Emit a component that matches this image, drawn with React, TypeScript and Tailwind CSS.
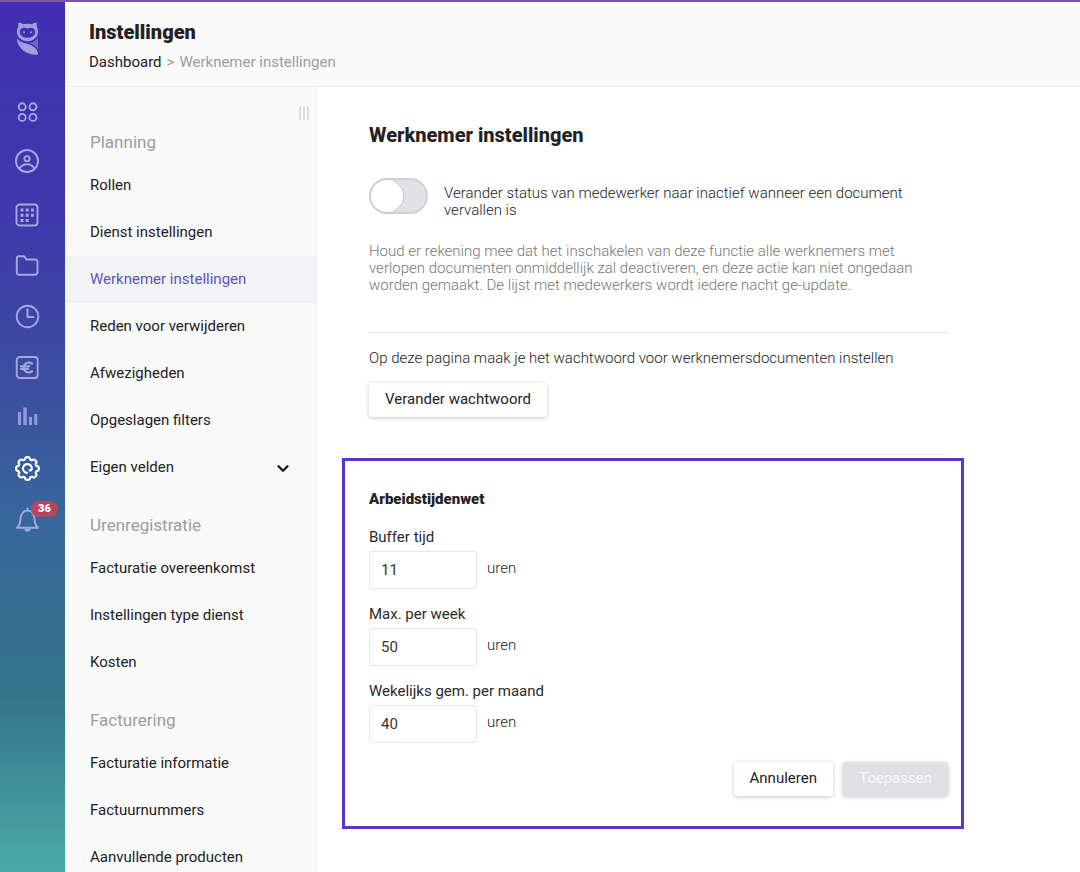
import { useState, type ReactNode } from 'react';
import clsx from 'clsx';

interface NavItem {
  label: string;
  expandable?: boolean;
}

interface NavGroup {
  title: string;
  items: NavItem[];
}

const groups: NavGroup[] = [
  {
    title: 'Planning',
    items: [
      { label: 'Rollen' },
      { label: 'Dienst instellingen' },
      { label: 'Werknemer instellingen' },
      { label: 'Reden voor verwijderen' },
      { label: 'Afwezigheden' },
      { label: 'Opgeslagen filters' },
      { label: 'Eigen velden', expandable: true },
    ],
  },
  {
    title: 'Urenregistratie',
    items: [
      { label: 'Facturatie overeenkomst' },
      { label: 'Instellingen type dienst' },
      { label: 'Kosten' },
    ],
  },
  {
    title: 'Facturering',
    items: [
      { label: 'Facturatie informatie' },
      { label: 'Factuurnummers' },
      { label: 'Aanvullende producten' },
    ],
  },
];

// outline of a gear with eight soft teeth, centred in the 26px icon box
const gearPoints = Array.from({ length: 144 }, (_, i) => {
  const angle = (i / 144) * Math.PI * 2;
  const radius = 10.2 + 1.1 * Math.tanh(2.2 * (Math.cos(8 * angle) + 0.25));
  return `${(13.5 + radius * Math.cos(angle)).toFixed(2)},${(12.5 + radius * Math.sin(angle)).toFixed(2)}`;
}).join(' ');

function RailLink({ label, active, children }: { label: string; active?: boolean; children: ReactNode }) {
  return (
    <a
      href="#"
      aria-label={label}
      className={clsx('relative flex h-[51px] shrink-0 items-center', active ? 'text-white' : 'text-[#a5a6e6]')}
    >
      <svg
        width="26"
        height="26"
        viewBox="0 0 26 26"
        fill="none"
        stroke="currentColor"
        strokeWidth="1.9"
        strokeLinecap="round"
        strokeLinejoin="round"
        className="overflow-visible"
      >
        {children}
      </svg>
      {label === 'Meldingen' && (
        <span className="absolute left-[17px] top-[7px] flex h-4 w-[27px] items-center justify-center rounded-full bg-[#b8455f] text-[11px] font-black text-white">
          36
        </span>
      )}
    </a>
  );
}

function Rail() {
  return (
    <aside className="flex w-[65px] shrink-0 flex-col overflow-hidden bg-[linear-gradient(180deg,#402fb0_0%,#3f38ab_25%,#3b509f_45%,#37679a_60%,#35758b_80%,#4baaa8_100%)] pl-[14px] pt-[18px]">
      <a href="#" aria-label="Home" className="mb-[30px] block text-[#a39de4]">
        <svg width="26" height="36" viewBox="0 0 26 36" fill="currentColor">
          <path
            fillRule="evenodd"
            d="M4.500 2.500c1.800.2 3.200.8 4.400 1.800 3-.9 6.200-.9 9.200 0 1.200-1 2.600-1.600 4.400-1.800l.3 4.500c1 1.700 1.300 3.500 1.200 5.500-.4 5-4.900 8.700-10.500 8.700S3.400 17.500 3 12.500c-.1-2 .2-3.800 1.200-5.500zM13.500 8.500C10.500 6.800 5.700 7.600 5.700 11.700c0 4 3.800 6 7.800 6s7.800-2 7.800-6c0-4.100-4.800-4.900-7.800-3.200z"
          />
          <circle cx="10" cy="12.300" r="1" />
          <circle cx="17" cy="12.300" r="1" />
          <path d="M3 18.500c3.500 4.700 9 4.500 13.500 6.500 4.500 2 7.500 5 7.500 9.500-5 .8-10-.5-14-3.500-4.500-3.400-7-7.500-7-12.500z" />
          <path d="M24 17.500v12c-2-3.500-5-5.300-9-6.700 4-.5 7-2 9-5.300z" opacity=".5" />
        </svg>
      </a>
      <RailLink label="Dashboard">
        <circle cx="8.200" cy="7.800" r="3.500" />
        <circle cx="19" cy="7.800" r="3.500" />
        <circle cx="8.200" cy="18.400" r="3.500" />
        <circle cx="19" cy="18.400" r="3.500" />
      </RailLink>
      <RailLink label="Werknemers">
        <circle cx="13" cy="11" r="11" />
        <circle cx="13" cy="8.700" r="2.600" />
        <path d="M5.500 18.500c1.800-3 4.400-4.300 7.500-4.300s5.700 1.300 7.500 4.300" />
      </RailLink>
      <RailLink label="Planning">
        <rect x="2.500" y="3.500" width="21" height="21" rx="3" />
        <g fill="currentColor" stroke="none">
          <path d="M6.500 7.500h3v3h-3zM11.700 7.500h3v3h-3zM16.900 7.500h3v3h-3zM6.500 12.700h3v3h-3zM11.700 12.700h3v3h-3zM16.900 12.700h3v3h-3zM6.500 17.900h3v3h-3zM11.700 17.900h3v3h-3z" />
        </g>
      </RailLink>
      <RailLink label="Documenten">
        <path d="M2.800 20.500v-14A2.200 2.200 0 0 1 5 4.300h4.200c.8 0 1.300.3 1.700 1L12.300 7.500h9A2.200 2.200 0 0 1 23.500 9.700v10.800a2.200 2.200 0 0 1-2.200 2.200H5a2.200 2.200 0 0 1-2.200-2.200z" />
      </RailLink>
      <RailLink label="Uren">
        <circle cx="13.500" cy="13.500" r="10.800" />
        <path d="M13.500 6.300V14h6" />
      </RailLink>
      <RailLink label="Financieel">
        <rect x="2.700" y="3" width="21" height="21" rx="3" />
        <path d="M18 9.700a5 5 0 1 0 0 7.600M7 12.300h8M7 15h7" strokeWidth="2.200" />
      </RailLink>
      <RailLink label="Rapporten">
        <g stroke="none" fill="currentColor" opacity=".85">
          <path d="M4 7h3v13H4zM9.300 2.500h3.400V20H9.300zM15 12h3v8h-3zM20.300 9h3v11h-3z" />
        </g>
      </RailLink>
      <RailLink label="Instellingen" active>
        <polygon points={gearPoints} strokeWidth="2.200" />
        <path strokeWidth="2.200" d="M12.800 16.800a4.400 4.400 0 1 1 5-4.200c-.1 1.400-1.100 2-2.300 1.800" />
      </RailLink>
      <RailLink label="Meldingen">
        <path d="M3 20.800c2.300-1.800 3-3.600 3.300-7.300C6.700 7 8.500 3.500 13.500 3.500s6.800 3.500 7.200 10c.3 3.700 1 5.500 3.300 7.300z" />
        <path d="M13.500 1.500v2" />
        <path d="M10.300 22h6.400c-.4 1.800-1.600 2.800-3.200 2.800s-2.800-1-3.200-2.800z" fill="currentColor" stroke="none" />
      </RailLink>
    </aside>
  );
}

function SideNav() {
  const [current, setCurrent] = useState('Werknemer instellingen');

  return (
    <nav className="relative w-[252px] shrink-0 overflow-hidden border-r border-[#f0f1f3] bg-[#fafafa] pt-[21px]">
      <button aria-label="Menu verslepen" className="absolute right-[7px] top-[19px] flex gap-[2px]">
        <span className="h-[14px] w-[2px] bg-[#dcdcde]" />
        <span className="h-[14px] w-[2px] bg-[#dcdcde]" />
        <span className="h-[14px] w-[2px] bg-[#dcdcde]" />
      </button>
      {groups.map((group) => (
        <section key={group.title}>
          <h2 className="flex h-[54px] items-center pl-[25px] pt-4 text-[17px] text-[#9b9ca6]">{group.title}</h2>
          <ul>
            {group.items.map((item) => (
              <li key={item.label}>
                <a
                  href="#"
                  onClick={() => setCurrent(item.label)}
                  className={clsx(
                    'flex h-[47px] items-center justify-between pl-[25px] pr-[26px]',
                    current === item.label ? 'bg-[#f1f3f5] text-[#6353b8]' : 'text-[#222]',
                  )}
                >
                  {item.label}
                  {item.expandable && (
                    <svg width="14" height="10" viewBox="0 0 14 10" fill="none" stroke="#111" strokeWidth="2.200">
                      <path d="M2.500 3.200L7 7.700l4.500-4.500" strokeLinecap="round" strokeLinejoin="round" />
                    </svg>
                  )}
                </a>
              </li>
            ))}
          </ul>
        </section>
      ))}
    </nav>
  );
}

function HoursField({ id, label, initial }: { id: string; label: string; initial: string }) {
  const [value, setValue] = useState(initial);

  return (
    <div className="mb-[15px]">
      <label htmlFor={id} className="block leading-5 text-[#2a2a2a]">
        {label}
      </label>
      <div className="mt-1 flex items-center gap-[10px]">
        <input
          id={id}
          type="text"
          inputMode="numeric"
          value={value}
          onChange={(e) => setValue(e.target.value)}
          className="h-[38px] w-[108px] rounded-[3px] border border-[#e6e6e9] bg-white px-[11px] text-[#333] outline-none focus:border-[#5a35cc]"
        />
        <span className="pb-1 font-light text-[#222]">uren</span>
      </div>
    </div>
  );
}

const buttonClass = 'h-[34px] rounded-[3px] px-4 pb-[2px] shadow-[0_1px_4px_rgba(0,0,0,0.22)]';

export default function App() {
  const [inactive, setInactive] = useState(false);

  return (
    <div className="flex h-screen flex-col overflow-hidden border-t-2 border-[#7d55a8] bg-white font-['Roboto',sans-serif] text-[15px] text-[#222]">
      <div className="flex min-h-0 flex-1">
        <Rail />
        <div className="flex min-w-0 flex-1 flex-col">
          <header className="h-[85px] shrink-0 border-b border-[#eff0f2] bg-[#fafafa] pl-6 pt-[17px]">
            <h1 className="text-xl font-black leading-[26px]">Instellingen</h1>
            <p className="mt-[7px] leading-5 text-[#9b9ca6]">
              <a href="#" className="text-[#222]">
                Dashboard
              </a>
              <span className="px-[5px]">&gt;</span>
              Werknemer instellingen
            </p>
          </header>

          <div className="flex min-h-0 flex-1">
            <SideNav />
            <main className="min-w-0 flex-1 overflow-hidden px-[25px]">
              <div className="max-w-[622px]">
                <div className="pl-[27px] pr-4 pt-[35px]">
                  <h2 className="text-xl font-extrabold leading-[26px]">Werknemer instellingen</h2>

                  <label className="mt-[30px] flex cursor-pointer gap-4">
                    <input
                      type="checkbox"
                      role="switch"
                      checked={inactive}
                      onChange={(e) => setInactive(e.target.checked)}
                      className="peer sr-only"
                    />
                    <span className="flex h-9 w-[59px] shrink-0 rounded-full border-2 border-[#d0d1d4] bg-[#e0e2e5] peer-checked:justify-end peer-checked:bg-[#5a35cc]">
                      <span className="size-8 rounded-full bg-white shadow-[1px_0_2px_rgba(0,0,0,0.12)]" />
                    </span>
                    <span className="pt-[7px] font-light leading-[17px]">
                      Verander status van medewerker naar inactief wanneer een document vervallen is
                    </span>
                  </label>

                  <p className="mt-6 font-light leading-[17px] text-[#777]">
                    Houd er rekening mee dat het inschakelen van deze functie alle werknemers met verlopen documenten
                    onmiddellijk zal deactiveren, en deze actie kan niet ongedaan worden gemaakt. De lijst met
                    medewerkers wordt iedere nacht ge-update.
                  </p>

                  <hr className="mt-[38px] border-[#e6e6e8]" />

                  <p className="mt-[15px] font-light leading-5">
                    Op deze pagina maak je het wachtwoord voor werknemersdocumenten instellen
                  </p>
                  <button className={clsx(buttonClass, 'mt-[15px] block bg-white')}>Verander wachtwoord</button>

                  <hr className="mt-[37px] border-[#eeeef0]" />
                </div>

                <form
                  onSubmit={(e) => e.preventDefault()}
                  className="mt-[3px] border-[3px] border-[#5a35cc] pb-[30px] pl-6 pr-[13px] pt-7"
                >
                  <h3 className="mb-[18px] font-black leading-5">Arbeidstijdenwet</h3>
                  <HoursField id="buffer" label="Buffer tijd" initial="11" />
                  <HoursField id="max-week" label="Max. per week" initial="50" />
                  <HoursField id="avg-month" label="Wekelijks gem. per maand" initial="40" />
                  <div className="mt-[19px] flex justify-end gap-[10px]">
                    <button type="button" className={clsx(buttonClass, 'bg-white')}>
                      Annuleren
                    </button>
                    <button type="submit" disabled className={clsx(buttonClass, 'bg-[#dfe0e4] text-[#f8f8fa]')}>
                      Toepassen
                    </button>
                  </div>
                </form>
              </div>
            </main>
          </div>
        </div>
      </div>
    </div>
  );
}
